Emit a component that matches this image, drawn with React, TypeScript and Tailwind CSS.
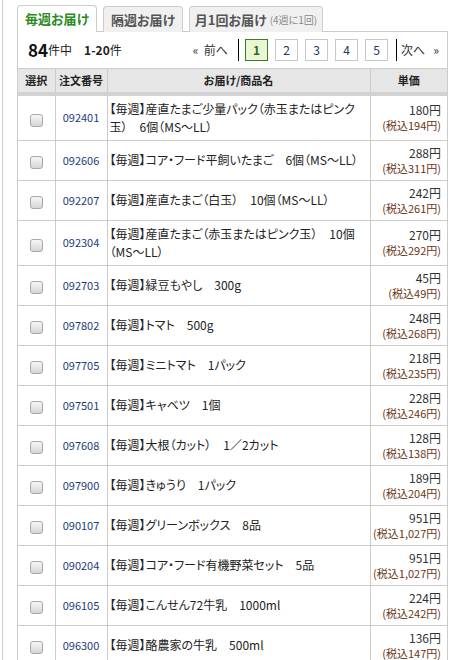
import React from 'react';

type Item = { no: string; name: string; price: string; tax: string };

const items: Item[] = [
  { no: '092401', name: '【毎週】産直たまご少量パック（赤玉またはピンク玉）　6個（MS～LL）', price: '180', tax: '194' },
  { no: '092606', name: '【毎週】コア・フード平飼いたまご　6個（MS～LL）', price: '288', tax: '311' },
  { no: '092207', name: '【毎週】産直たまご（白玉）　10個（MS～LL）', price: '242', tax: '261' },
  { no: '092304', name: '【毎週】産直たまご（赤玉またはピンク玉）　10個（MS～LL）', price: '270', tax: '292' },
  { no: '092703', name: '【毎週】緑豆もやし　300g', price: '45', tax: '49' },
  { no: '097802', name: '【毎週】トマト　500g', price: '248', tax: '268' },
  { no: '097705', name: '【毎週】ミニトマト　1パック', price: '218', tax: '235' },
  { no: '097501', name: '【毎週】キャベツ　1個', price: '228', tax: '246' },
  { no: '097608', name: '【毎週】大根（カット）　1／2カット', price: '128', tax: '138' },
  { no: '097900', name: '【毎週】きゅうり　1パック', price: '189', tax: '204' },
  { no: '090107', name: '【毎週】グリーンボックス　8品', price: '951', tax: '1,027' },
  { no: '090204', name: '【毎週】コア・フード有機野菜セット　5品', price: '951', tax: '1,027' },
  { no: '096105', name: '【毎週】こんせん72牛乳　1000ml', price: '224', tax: '242' },
  { no: '096300', name: '【毎週】酪農家の牛乳　500ml', price: '136', tax: '147' },
];

const font = "font-['Noto_Sans_CJK_JP',sans-serif] [font-feature-settings:'palt']";

const PageBtn = ({ n, active }: { n: number; active?: boolean }) => (
  <span
    className={
      active
        ? 'w-[23px] h-[22px] flex items-center justify-center border border-[#3a7d22] bg-[#e9f5d3] text-[#2f6d17] text-[12px] font-bold'
        : 'w-[23px] h-[22px] flex items-center justify-center border border-[#c8c8c8] bg-white text-[#1d3566] text-[12px]'
    }
  >
    {n}
  </span>
);

export default function App() {
  return (
    <div className={`${font} bg-white min-h-[660px] ml-[2px] border-l border-[#cfcfcf] pl-[14px] pt-[5px] text-[#222]`}>
      <div className="w-[431px]">
        <div className="flex items-end gap-[6px] relative z-10 -mb-px">
          <div className="w-[80px] h-[27px] flex items-center justify-center border border-[#ccc] border-b-0 rounded-t-[4px] bg-white text-[#2e8b1e] text-[13px] font-bold">
            毎週お届け
          </div>
          <div className="w-[80px] h-[26px] flex items-center justify-center border border-[#ccc] border-b-0 rounded-t-[4px] bg-[#f0f0f0] text-[#555] text-[13px] font-bold">
            隔週お届け
          </div>
          <div className="w-[134px] h-[26px] flex items-center justify-center border border-[#ccc] border-b-0 rounded-t-[4px] bg-[#f0f0f0] text-[#555] text-[13px] font-bold">
            月1回お届け<span className="text-[10px] font-normal text-[#888] ml-[3px]">(4週に1回)</span>
          </div>
        </div>
        <div className="border border-[#ccc] border-b-0">
          <div className="h-[35px] flex items-center pl-[10px] pr-[8px]">
            <span className="text-[17px] font-bold text-[#111] leading-none">84</span>
            <span className="text-[12px]">件中</span>
            <span className="text-[12px] font-bold ml-[12px]">1-20</span>
            <span className="text-[12px]">件</span>
            <span className="ml-auto text-[12px] text-[#333] mr-[10px]">«&nbsp;&nbsp;前へ</span>
            <span className="w-px h-[22px] bg-black mr-[6px]"></span>
            <div className="flex gap-[7px]">
              <PageBtn n={1} active />
              <PageBtn n={2} />
              <PageBtn n={3} />
              <PageBtn n={4} />
              <PageBtn n={5} />
            </div>
            <span className="w-px h-[22px] bg-black ml-[8px] mr-[4px]"></span>
            <span className="text-[12px] text-[#333]">次へ&nbsp;&nbsp;&nbsp;»</span>
          </div>
          <table className="w-full border-collapse mt-[1px] table-fixed">
            <colgroup>
              <col className="w-[37px]" />
              <col className="w-[52px]" />
              <col />
              <col className="w-[77px]" />
            </colgroup>
            <thead>
              <tr className="bg-[#e6e6e6] h-[25px] text-[11px] font-bold text-[#222]">
                <th className="border-t border-r border-[#ccc] border-b-[4px] border-b-[#d2d2d2]">選択</th>
                <th className="border-t border-r border-[#ccc] border-b-[4px] border-b-[#d2d2d2]">注文番号</th>
                <th className="border-t border-r border-[#ccc] border-b-[4px] border-b-[#d2d2d2]">お届け/商品名</th>
                <th className="border-t border-[#ccc] border-b-[4px] border-b-[#d2d2d2]">単価</th>
              </tr>
            </thead>
            <tbody>
              {items.map((it) => (
                <tr key={it.no} className="border-b border-[#ccc]">
                  <td className="border-r border-[#ccc] text-center align-middle">
                    <span className="inline-block align-middle w-[13px] h-[13px] rounded-[3px] border border-[#a8a8a8] bg-gradient-to-b from-[#f7f7f7] to-[#d6d6d6]"></span>
                  </td>
                  <td className="border-r border-[#ccc] text-[11px] text-[#1d3a7a] text-center">{it.no}</td>
                  <td className="border-r border-[#ccc] text-[12px] leading-[18px] text-[#222] pl-[2px] pr-[2px] py-[4px]">{it.name}</td>
                  <td className="text-right pr-[6px] py-[4px]">
                    <div className="text-[12px] leading-[16px] text-[#333]">{it.price}円</div>
                    <div className="text-[11px] leading-[15px] text-[#6a3612]">(税込{it.tax}円)</div>
                  </td>
                </tr>
              ))}
            </tbody>
          </table>
        </div>
      </div>
    </div>
  );
}
